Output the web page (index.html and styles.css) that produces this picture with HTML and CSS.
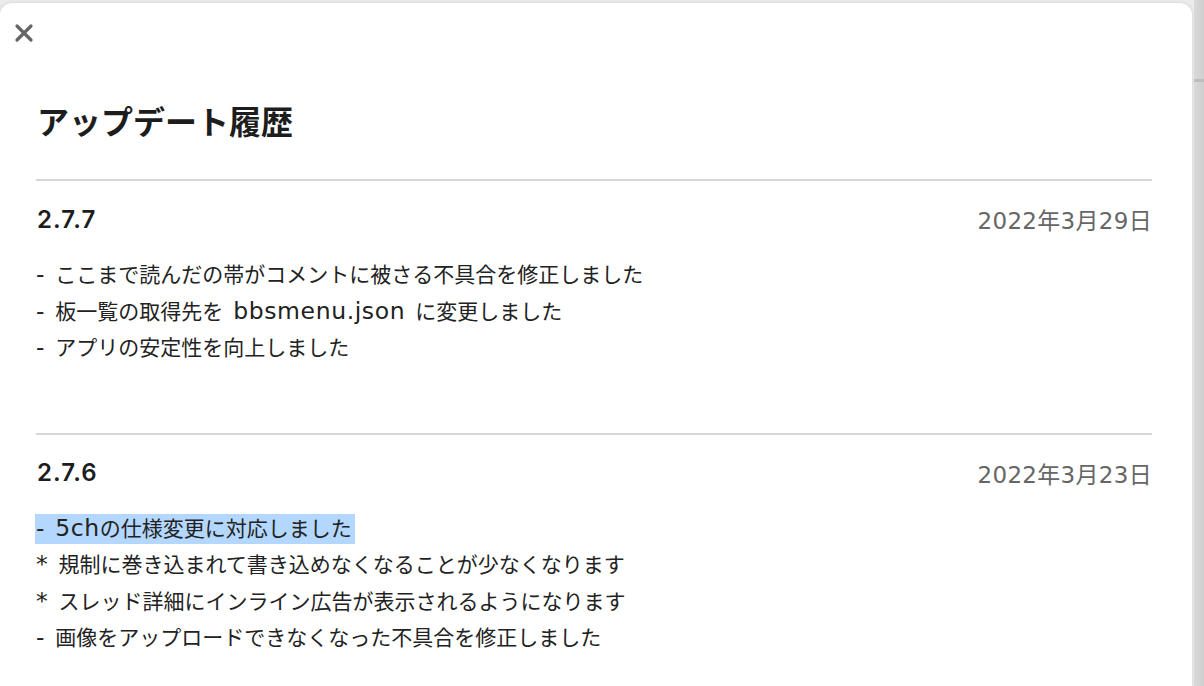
FILE: index.html
```html
<!DOCTYPE html>
<html lang="ja">
<head>
    <meta charset="utf-8" />
    <title>アップデート履歴</title>
    <link rel="stylesheet" href="styles.css">
</head>
<body>
    <div id="sheet">
        <div id="toolbar">
            <div class="close_button" title="閉じる">
                <svg width="20" height="20" viewBox="0 0 20 20">
                    <path d="M3 3 L17 17 M17 3 L3 17" stroke="#666" stroke-width="3.2" stroke-linecap="round" fill="none"/>
                </svg>
            </div>
        </div>
        <h1>アップデート履歴</h1>

        <div class="release first">
            <div class="release_head">
                <span class="version">2.7.7</span>
                <span class="date">2022年3月29日</span>
            </div>
            <ul class="notes">
                <li><span class="en">- </span>ここまで読んだの帯がコメントに被さる不具合を修正しました</li>
                <li><span class="en">- </span>板一覧の取得先を<span class="en"> bbsmenu.json </span>に変更しました</li>
                <li><span class="en">- </span>アプリの安定性を向上しました</li>
            </ul>
        </div>

        <div class="release">
            <div class="release_head">
                <span class="version">2.7.6</span>
                <span class="date">2022年3月23日</span>
            </div>
            <ul class="notes">
                <li><span class="selected"><span class="en">- 5ch</span>の仕様変更に対応しました</span></li>
                <li><span class="en">* </span>規制に巻き込まれて書き込めなくなることが少なくなります</li>
                <li><span class="en">* </span>スレッド詳細にインライン広告が表示されるようになります</li>
                <li><span class="en">- </span>画像をアップロードできなくなった不具合を修正しました</li>
            </ul>
        </div>
    </div>
    <div id="backdrop">
        <div class="backdrop_rule"></div>
    </div>
</body>
</html>
```

FILE: styles.css
```css
html, body {
    margin: 0;
    padding: 0;
    height: 100%;
}
body {
    display: flex;
    overflow: hidden;
    background: #ececec;
    font-family: "DejaVu Sans", "Noto Sans CJK JP", sans-serif;
    color: #222;
}
ul, li, h1 {
    margin: 0;
    padding: 0;
    list-style: none;
}
#sheet {
    width: 1192px;
    flex: none;
    margin-top: 3px;
    padding: 0 40px 0 36px;
    box-sizing: border-box;
    background: #fff;
    border-radius: 12px 12px 0 0;
    box-shadow: 0 0 4px rgba(0, 0, 0, 0.12);
}
#toolbar {
    height: 60px;
    display: flex;
    align-items: center;
}
.close_button {
    width: 20px;
    height: 20px;
    margin-left: -22px;
    cursor: pointer;
}
h1 {
    font-family: "Noto Sans CJK JP", sans-serif;
    font-size: 32px;
    font-weight: bold;
    line-height: 40px;
    margin-top: 37px;
    margin-left: 1px;
    color: #1d1d1d;
}
.release {
    border-top: 2px solid #d6d6d6;
    padding-top: 21px;
}
.release.first {
    margin-top: 39px;
}
.release_head {
    display: flex;
    justify-content: space-between;
    align-items: center;
    height: 34px;
    padding-left: 1px;
}
.version {
    font-family: "Inter", sans-serif;
    font-size: 24px;
    font-weight: 600;
    letter-spacing: 1.1px;
    color: #1d1d1d;
}
.date {
    font-size: 23px;
    letter-spacing: 0.3px;
    color: #666;
}
.notes {
    margin-top: 21px;
    padding-bottom: 66px;
    font-size: 21px;
    line-height: 36.5px;
    color: #222;
    white-space: nowrap;
}
.notes li {
    height: 36.5px;
}
.release:last-child .notes {
    padding-bottom: 0;
}
.en {
    font-size: 23.5px;
    line-height: 20px;
    letter-spacing: 0.6px;
    word-spacing: 2px;
}
.selected {
    background: #b3d7fe;
    padding: 3px 3px 3px 1px;
    margin-left: -1px;
}
#backdrop {
    flex: 1;
    margin-left: 2px;
    background: linear-gradient(to right, #d9d9d9, #cfcfcf);
}
.backdrop_rule {
    margin-top: 79px;
    height: 3px;
    background: #bdbdbd;
}
```
